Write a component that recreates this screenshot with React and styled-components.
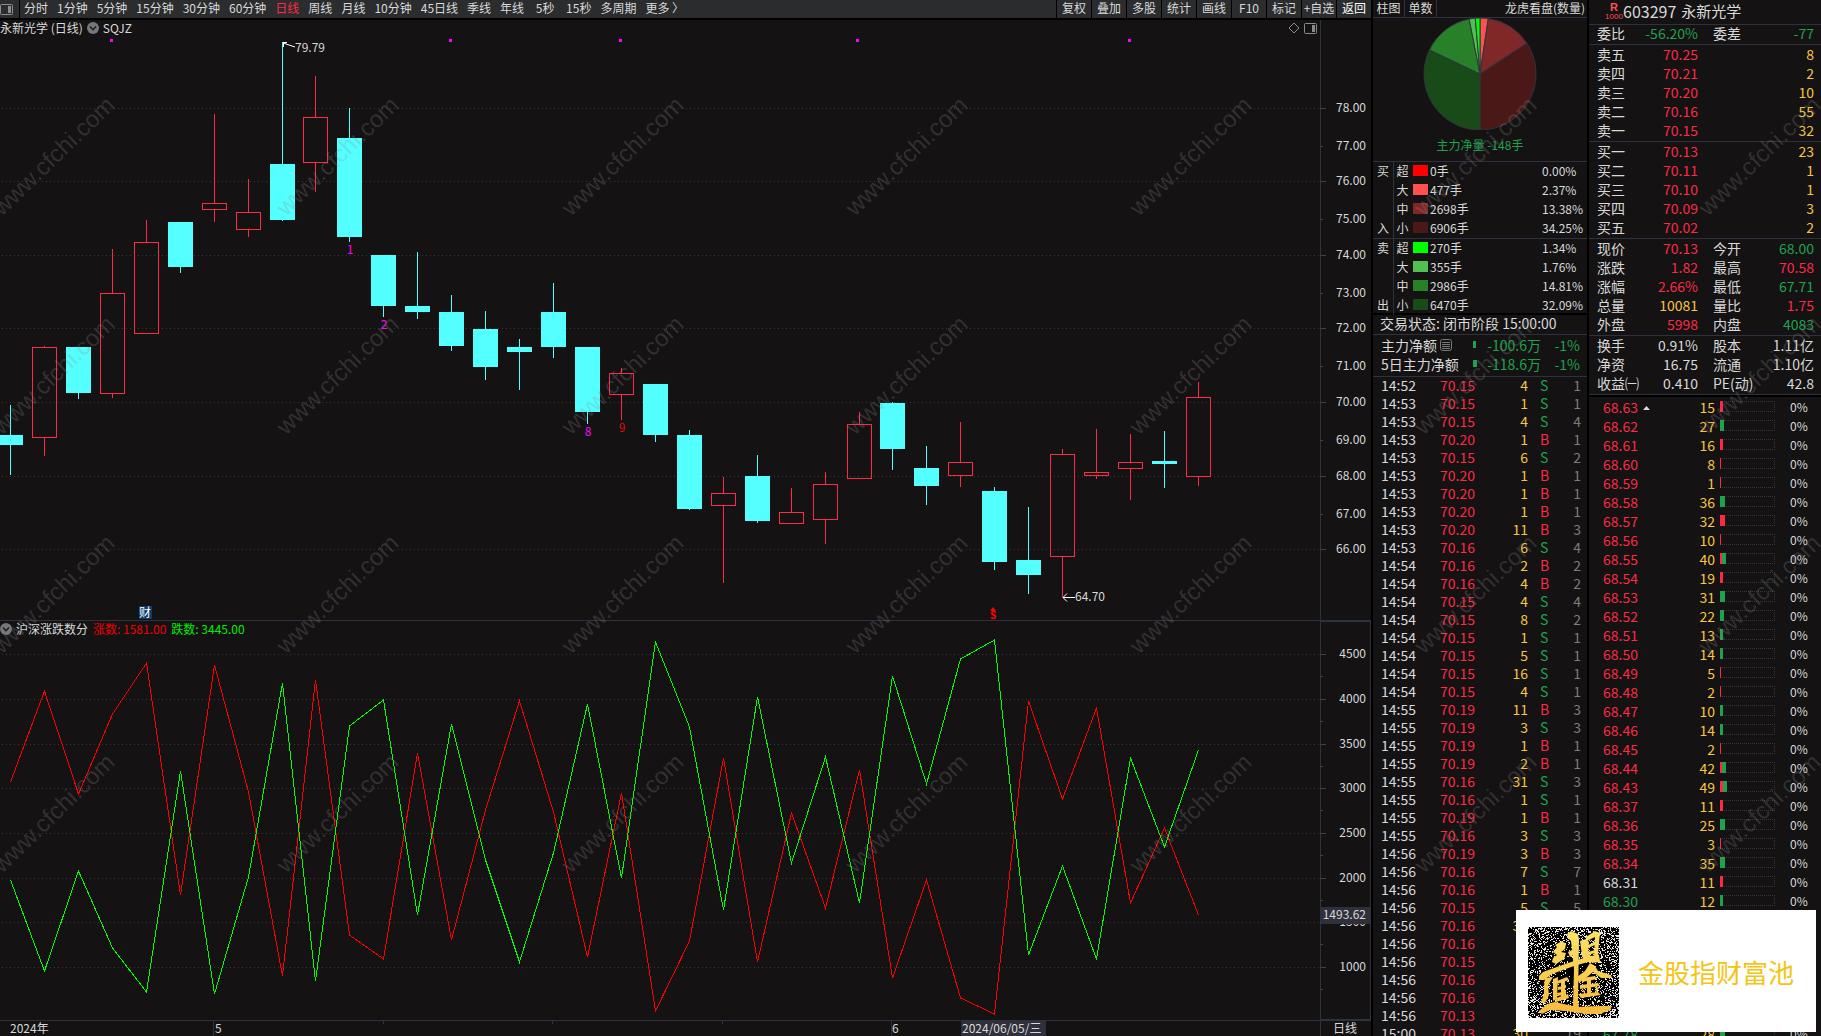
import React from 'react';
import styled, { createGlobalStyle, css } from 'styled-components';

const color = {
  bg: '#141213',
  line: '#2e323e',
  text: '#d9d9d9',
  up: '#fb2a45',
  down: '#1ea24e',
  cyan: '#54ffff',
  amber: '#f7c544',
  muted: '#7d7d7d',
};

const tones = {
  text: color.text,
  up: color.up,
  down: color.down,
  amber: color.amber,
  muted: color.muted,
};

const GlobalStyle = createGlobalStyle`
  * { box-sizing: border-box; }
  body {
    margin: 0;
    overflow: hidden;
    background: #000;
    color: ${color.text};
    font-family: "Noto Sans CJK SC", "Noto Sans", sans-serif;
    font-size: 12px;
    line-height: 16px;
  }
  button {
    margin: 0;
    padding: 0;
    border: 0;
    background: none;
    color: inherit;
    font: inherit;
    white-space: nowrap;
    cursor: pointer;
  }
  table { border-collapse: collapse; border-spacing: 0; table-layout: fixed; }
  td, th { padding: 0; font-weight: normal; text-align: left; white-space: nowrap; }
`;

const Screen = styled.div`
  position: relative;
  display: flex;
  gap: 2px;
  height: 100vh;
  overflow: hidden;
`;

const ChartColumn = styled.main`
  display: flex;
  flex: 1;
  flex-direction: column;
  min-width: 0;
  background: ${color.bg};
`;

const Toolbar = styled.nav`
  display: flex;
  flex: none;
  height: 20px;
  border-bottom: 2px solid #000;
  background: #2a2c2e;
`;

const LayoutButton = styled.button`
  display: flex;
  align-items: center;
  width: 20px;
  border-right: 1px solid #000;
`;

const Periods = styled.div`
  display: flex;
  flex: 1;
  gap: 9px;
  padding-left: 4px;
`;

const Period = styled.button`
  min-width: 24px;
  padding-bottom: 2px;
  ${(props) => props.$active && css`color: ${color.up};`}
`;

const Tool = styled.button`
  width: 35px;
  padding-bottom: 2px;
  border-left: 1px solid #000;
  ${(props) => props.$strong && css`color: #fff;`}
`;

const PaneHead = styled.div`
  display: flex;
  flex: none;
  height: 17px;
`;

const PaneTitle = styled.div`
  display: flex;
  flex: 1;
  align-items: center;
  gap: 4px;
  padding: 0 3px 1px 0;
`;

const Spacer = styled.span`
  flex: 1;
`;

const AxisHead = styled.div`
  width: 51px;
  border-left: 1px solid ${color.line};
  ${(props) => props.$boxed && css`
  border: 1px solid ${color.line};
  border-bottom: 0;
  `}
`;

const Reading = styled.span`
  margin-left: 1px;
  color: ${(props) => props.$color};
`;

const Plot = styled.svg`
  display: block;
  flex: ${(props) => props.$grow} 1 0;
  width: 100%;
  min-height: 0;
  overflow: visible;
`;

const Rule = styled.div`
  flex: none;
  height: 1px;
  background: ${color.line};
`;

const TimeAxis = styled.svg`
  display: block;
  flex: none;
  width: 100%;
  height: 15px;
  overflow: visible;
`;

const Panel = styled.aside`
  flex: none;
  width: ${(props) => props.$width}px;
  overflow: hidden;
  background: ${color.bg};
`;

const PanelTabs = styled.div`
  display: flex;
  height: 18px;
  border-bottom: 1px solid ${color.line};
  line-height: 15px;
`;

const PanelTab = styled.button`
  width: 32px;
  padding-bottom: 2px;
  border-right: 1px solid ${color.line};
`;

const PanelCaption = styled.span`
  flex: 1;
  padding-right: 2px;
  text-align: right;
`;

const PieBox = styled.figure`
  display: flex;
  flex-direction: column;
  align-items: center;
  height: 144px;
  margin: 0;
  border-bottom: 1px solid ${color.line};

  figcaption {
    margin-top: 7px;
    color: ${color.down};
  }
`;

const OrderBox = styled.section`
  height: 153px;
  border-bottom: 2px solid #000;
`;

const OrderTable = styled.table`
  width: 100%;

  tbody + tbody { border-top: 1px solid ${color.line}; }
  tr { height: 19px; }
  td, th { padding-bottom: 2px; line-height: 17px; }
`;

const SideCell = styled.th`
  && { padding-left: 4px; }
  border-right: 1px solid ${color.line};
`;

const SizeCell = styled.td`
  && { padding-left: 3px; }
`;

const Swatch = styled.span`
  display: block;
  width: 15px;
  height: 11px;
  background: ${(props) => props.$color};
`;

const Status = styled.div`
  position: relative;
  height: 20px;
  padding-left: 7px;
  border-bottom: 1px solid ${color.line};
  background: ${color.bg};
  font-size: 14px;
  line-height: 16px;
`;

const FlowRows = styled.div`
  height: 42px;
  border-bottom: 1px solid ${color.line};
  font-size: 14px;
`;

const FlowRow = styled.div`
  display: flex;
  align-items: center;
  height: 19px;
  padding: 0 7px 0 8px;
  color: ${color.down};
`;

const FlowLabel = styled.span`
  display: flex;
  align-items: center;
  gap: 3px;
  width: 92px;
  color: ${color.text};
`;

const FlowBar = styled.i`
  width: ${(props) => props.$size}px;
  height: 7px;
  background: ${color.down};
`;

const FlowValue = styled.span`
  flex: 1;
  text-align: right;
`;

const FlowShare = styled.span`
  width: 39px;
  text-align: right;
`;

const Cell = styled.td`
  color: ${(props) => tones[props.$tone || 'text']};
  ${(props) => props.$right && css`text-align: right;`}
`;

const TickTable = styled.table`
  width: 200px;
  margin-left: 8px;
  font-size: 14px;

  tr { height: 18px; }
  td { padding-bottom: 2px; line-height: 16px; }
  td:nth-child(4) { padding-left: 12px; }
`;

const StockHead = styled.header`
  display: flex;
  align-items: center;
  height: 25px;
  padding: 0 0 3px 16px;
  border-bottom: 1px solid ${color.line};
  font-size: 15px;
`;

const StockBadge = styled.span`
  width: 18px;
  margin-top: 3px;
  color: #ff5050;
  font-family: "Liberation Sans", sans-serif;
  font-size: 8px;
  line-height: 9px;
  text-align: center;

  b { display: block; font-size: 11px; }
`;

const StockCode = styled.span`
  margin-right: 5px;
  font-size: 16px;
`;

const QuoteTable = styled.table`
  width: 217px;
  margin: 0 8px;
  font-size: 14px;

  tr { height: 19px; }
  td, th { padding-bottom: 2px; line-height: 17px; }
  th:nth-child(3) { padding-left: 15px; }
`;

const QuoteGroup = styled.section`
  height: ${(props) => props.$rows * 19 + (props.$rows > 1 ? 2 : 1)}px;
  padding-top: ${(props) => (props.$rows > 1 ? 1 : 0)}px;
  border-bottom: 1px solid ${color.line};
`;

const LevelTable = styled.table`
  width: 218px;
  margin-left: 14px;
  font-size: 14px;

  tr { height: 19px; }
  td { line-height: 18px; }
  td:last-child { padding-left: 15px; font-size: 12px; }
`;

const LevelWrap = styled.section`
  border-top: 2px solid #000;
`;

const Track = styled.div`
  display: flex;
  width: 55px;
  height: 11px;
  margin-left: 5px;
  border: 1px dotted #353740;
  border-left: 0;
`;

const TrackBar = styled.i`
  height: 11px;
  margin-top: -1px;
  background: ${(props) => tones[props.$tone]};
`;

const UpMark = styled.svg`
  margin-left: 5px;
  vertical-align: 3px;
`;

const Gap = styled.tr`
  && { height: 114px; }
`;

const Watermarks = styled.svg`
  position: absolute;
  inset: 0;
  width: 100%;
  height: 100%;
  pointer-events: none;
`;

const BrandCard = styled.div`
  position: absolute;
  right: 5px;
  bottom: 4px;
  display: flex;
  align-items: center;
  gap: 19px;
  width: 300px;
  height: 122px;
  padding: 2px 0 0 12px;
  background: #fff;
  color: #f4c414;
  font-size: 26px;
  line-height: 32px;
`;

const periods = ['分时', '1分钟', '5分钟', '15分钟', '30分钟', '60分钟', '日线', '周线', '月线', '10分钟', '45日线', '季线', '年线', '5秒', '15秒', '多周期', '更多 〉'];
const tools = ['复权', '叠加', '多股', '统计', '画线', 'F10', '标记', '+自选', '返回'];

// rising?, high, body top, body bottom, low
const candles = [
  [0, 405, 435, 445, 475], [1, 346, 347, 437, 456], [0, 347, 347, 393, 399], [1, 249, 293, 393, 398],
  [1, 220, 242, 333, 333], [0, 222, 222, 267, 273], [1, 114, 203, 209, 222], [1, 179, 212, 229, 237],
  [0, 42, 164, 220, 221], [1, 76, 117, 162, 192], [0, 108, 138, 237, 242], [0, 255, 255, 306, 317],
  [0, 252, 306, 312, 319], [0, 295, 312, 346, 351], [0, 311, 329, 367, 380], [0, 339, 347, 352, 390],
  [0, 283, 312, 347, 358], [0, 347, 347, 412, 424], [1, 368, 373, 394, 420], [0, 384, 384, 435, 442],
  [0, 430, 435, 509, 510], [1, 477, 493, 505, 583], [0, 455, 476, 521, 523], [1, 488, 512, 523, 523],
  [1, 472, 484, 519, 544], [1, 412, 424, 478, 478], [0, 402, 403, 449, 470], [0, 446, 468, 486, 505],
  [1, 422, 462, 475, 487], [0, 487, 491, 562, 570], [0, 507, 560, 575, 594], [1, 449, 454, 556, 597],
  [1, 429, 472, 475, 479], [1, 434, 462, 468, 500], [0, 431, 461, 464, 488], [1, 382, 397, 476, 486],
];

const rising = [782, 691, 794, 714, 663, 895, 665, 792, 976, 680, 935, 959, 753, 940, 810, 701, 812, 957, 793, 1011, 941, 758, 962, 813, 908, 770, 978, 880, 998, 1014, 701, 799, 708, 903, 828, 915];
const falling = [880, 971, 871, 948, 992, 771, 994, 877, 683, 981, 726, 700, 915, 724, 860, 962, 853, 704, 878, 642, 727, 910, 697, 863, 757, 903, 676, 784, 659, 640, 955, 866, 959, 758, 847, 750];

const priceMarks = [[78, 108], [77, 146], [76, 181], [75, 219], [74, 255], [73, 293], [72, 328], [71, 366], [70, 402], [69, 440], [68, 476], [67, 514], [66, 549]];
const countMarks = [[4500, 654], [4000, 699], [3500, 744], [3000, 788], [2500, 833], [2000, 878], [1500, 922], [1000, 967]];

const slices = [
  [2.37, '#ff5050'], [13.38, '#802828'], [34.25, '#4b1818'],
  [32.09, '#184b18'], [14.81, '#288028'], [1.76, '#50c050'], [1.34, '#00ff00'],
];

const orders = [
  [['买', '超', '#ff0000', '0手', '0.00%'], ['', '大', '#ff5050', '477手', '2.37%'], ['', '中', '#802828', '2698手', '13.38%'], ['入', '小', '#4b1818', '6906手', '34.25%']],
  [['卖', '超', '#00ff00', '270手', '1.34%'], ['', '大', '#50c050', '355手', '1.76%'], ['', '中', '#288028', '2986手', '14.81%'], ['出', '小', '#184b18', '6470手', '32.09%']],
];

const ticks = [
  ['14:52', '70.15', 4, 'S', 1],
  ['14:53', '70.15', 1, 'S', 1],
  ['14:53', '70.15', 4, 'S', 4],
  ['14:53', '70.20', 1, 'B', 1],
  ['14:53', '70.15', 6, 'S', 2],
  ['14:53', '70.20', 1, 'B', 1],
  ['14:53', '70.20', 1, 'B', 1],
  ['14:53', '70.20', 1, 'B', 1],
  ['14:53', '70.20', 11, 'B', 3],
  ['14:53', '70.16', 6, 'S', 4],
  ['14:54', '70.16', 2, 'B', 2],
  ['14:54', '70.16', 4, 'B', 2],
  ['14:54', '70.15', 4, 'S', 4],
  ['14:54', '70.15', 8, 'S', 2],
  ['14:54', '70.15', 1, 'S', 1],
  ['14:54', '70.15', 5, 'S', 1],
  ['14:54', '70.15', 16, 'S', 1],
  ['14:54', '70.15', 4, 'S', 1],
  ['14:55', '70.19', 11, 'B', 3],
  ['14:55', '70.19', 3, 'S', 3],
  ['14:55', '70.19', 1, 'B', 1],
  ['14:55', '70.19', 2, 'B', 1],
  ['14:55', '70.16', 31, 'S', 3],
  ['14:55', '70.16', 1, 'S', 1],
  ['14:55', '70.19', 1, 'B', 1],
  ['14:55', '70.16', 3, 'S', 3],
  ['14:56', '70.19', 3, 'B', 3],
  ['14:56', '70.16', 7, 'S', 7],
  ['14:56', '70.16', 1, 'B', 1],
  ['14:56', '70.15', 5, 'S', 5],
  ['14:56', '70.16', 30],
  ['14:56', '70.16'],
  ['14:56', '70.15'],
  ['14:56', '70.16'],
  ['14:56', '70.16'],
  ['14:56', '70.13'],
  ['15:00', '70.13', 30, '', 19],
];

const sells = [['卖五', '70.25', 8], ['卖四', '70.21', 2], ['卖三', '70.20', 10], ['卖二', '70.16', 55], ['卖一', '70.15', 32]];
const buys = [['买一', '70.13', 23], ['买二', '70.11', 1], ['买三', '70.10', 1], ['买四', '70.09', 3], ['买五', '70.02', 2]];

const summary = [
  ['现价', '70.13', 'up', '今开', '68.00', 'down'],
  ['涨跌', '1.82', 'up', '最高', '70.58', 'up'],
  ['涨幅', '2.66%', 'up', '最低', '67.71', 'down'],
  ['总量', '10081', 'amber', '量比', '1.75', 'up'],
  ['外盘', '5998', 'up', '内盘', '4083', 'down'],
];

const basics = [
  ['换手', '0.91%', 'text', '股本', '1.11亿', 'text'],
  ['净资', '16.75', 'text', '流通', '1.10亿', 'text'],
  ['收益㈠', '0.410', 'text', 'PE(动)', '42.8', 'text'],
];

// price, volume, bought width, sold width
const levels = [
  ['68.63', 15, 3, 0], ['68.62', 27, 0, 4], ['68.61', 16, 3, 0], ['68.60', 8, 1, 0], ['68.59', 1, 1, 0],
  ['68.58', 36, 0, 5], ['68.57', 32, 5, 0], ['68.56', 10, 1, 0], ['68.55', 40, 2, 4], ['68.54', 19, 3, 0],
  ['68.53', 31, 0, 5], ['68.52', 22, 0, 4], ['68.51', 13, 0, 3], ['68.50', 14, 0, 3], ['68.49', 5, 1, 0],
  ['68.48', 2, 1, 0], ['68.47', 10, 0, 3], ['68.46', 14, 0, 3], ['68.45', 2, 1, 0], ['68.44', 42, 2, 4],
  ['68.43', 49, 3, 4], ['68.37', 11, 3, 0], ['68.36', 25, 0, 5], ['68.35', 3, 1, 0], ['68.34', 35, 0, 5],
  ['68.31', 11, 3, 0], ['68.30', 12, 0, 3],
];

const slotX = (i) => Math.floor(10.5 + i * 33.94) + 0.5;
const toPoints = (values) => values.map((y, i) => `${slotX(i)},${y}`).join(' ');

const levelTone = (price) => {
  if (price === '68.31') return 'text';
  return Number(price) > 68.31 ? 'up' : 'down';
};

const PanelIcon = ({ stroke }) => (
  <svg width="13" height="13" viewBox="0 0 13 13" aria-hidden="true">
    <rect x="0.5" y="1.5" width="12" height="10" rx="1" fill="none" stroke={stroke} />
    <rect x="8" y="3" width="3" height="7" fill={stroke} />
  </svg>
);

const ChevronIcon = () => (
  <svg width="12" height="12" viewBox="0 0 12 12" aria-hidden="true">
    <circle cx="6" cy="6" r="6" fill="#75777a" />
    <path d="M3 4.6L6 7.8L9 4.6" fill="none" stroke="#1b1b1c" strokeWidth="1.4" />
  </svg>
);

const GridLines = ({ marks, every }) => marks.filter((_, i) => i % every === 0).map(([value, y]) => (
  <line key={value} x1="2" x2="1320" y1={y + 0.5} y2={y + 0.5} stroke="#38383b" strokeDasharray="1 3" />
));

const AxisLabels = ({ marks, digits }) => marks.map(([value, y]) => (
  <text key={value} x="1366" y={y + 4} textAnchor="end">{value.toFixed(digits)}</text>
));

const Candle = ({ data, index }) => {
  const [isUp, high, top, bottom, low] = data;
  const x = slotX(index);
  const tint = isUp ? color.up : color.cyan;
  return (
    <g stroke={tint}>
      {high < top && <line x1={x} x2={x} y1={high} y2={top} />}
      {low > bottom && <line x1={x} x2={x} y1={bottom} y2={low} />}
      {isUp
        ? <rect x={x - 12} y={top + 0.5} width="24" height={bottom - top} fill="none" />
        : <rect x={x - 12.5} y={top} width="25" height={bottom - top} fill={tint} stroke="none" />}
    </g>
  );
};

const PriceChart = () => (
  <Plot $grow={583} viewBox="0 37 1371 583" preserveAspectRatio="none" fill={color.text} role="img" aria-label="日线">
    <g shapeRendering="crispEdges">
      <GridLines marks={priceMarks} every={2} />
      <line x1="1320.5" x2="1320.5" y1="37" y2="620" stroke={color.line} />
      {priceMarks.map(([value, y], i) => (
        <line key={value} x1="1320" x2={i % 2 ? 1323 : 1326} y1={y + 0.5} y2={y + 0.5} stroke="#3d414d" />
      ))}
      {candles.map((data, i) => <Candle key={i} data={data} index={i} />)}
      {[110, 449, 619, 856, 1128].map((x) => <rect key={x} x={x} y="39" width="3" height="3" fill="#ff00ff" />)}
    </g>
    <AxisLabels marks={priceMarks} digits={2} />
    <path d="M283 42.5h4M283 43l12 4M283.500 42v5" fill="none" stroke="#fff" />
    <text x="295" y="52">79.79</text>
    <path d="M1063 597.500h12M1067 593.500l-4 4l4 4" fill="none" stroke="#fff" />
    <text x="1075" y="601">64.70</text>
    <g fill="#ff00ff" textAnchor="middle">
      <text x="350" y="254">1</text>
      <text x="384" y="329">2</text>
      <text x="588" y="436">8</text>
      <text x="622" y="432" fill="#f00000">9</text>
    </g>
    <rect x="139" y="606" width="13" height="13" fill="#0d3b70" />
    <text x="145" y="617" textAnchor="middle" fill="#fff">财</text>
    <path d="M993 607l3 4h-6z" fill="#f00" />
    <text x="993" y="619" textAnchor="middle" fill="#f00" fontSize="10" fontWeight="bold">S</text>
  </Plot>
);

const BreadthChart = () => (
  <Plot $grow={382} viewBox="0 638 1371 382" preserveAspectRatio="none" fill={color.text} role="img" aria-label="沪深涨跌数分">
    <g shapeRendering="crispEdges" fill="none">
      <GridLines marks={countMarks} every={1} />
      <path d="M1320.500 638V1019.500H1370.500V638" stroke={color.line} />
      {countMarks.map(([value, y]) => (
        <path key={value} d={`M1320 ${y + 0.5}h6M1320 ${y + 22.5}h3`} stroke="#3d414d" />
      ))}
      <polyline points={toPoints(rising)} stroke="#f00" />
      <polyline points={toPoints(falling)} stroke="#0f0" />
    </g>
    <AxisLabels marks={countMarks} digits={0} />
    <rect x="1321" y="907" width="50" height="17" fill="#2f303c" />
    <text x="1366" y="919" textAnchor="end">1493.62</text>
  </Plot>
);

const Pie = () => {
  let turned = 0;
  const point = (share) => {
    const angle = (share / 100) * Math.PI * 2;
    return `${57 + Math.sin(angle) * 56} ${56 - Math.cos(angle) * 56}`;
  };
  return (
    <svg width="114" height="112" viewBox="0 0 114 112" aria-hidden="true">
      {slices.map(([share, fill]) => {
        const from = point(turned);
        turned += share;
        return <path key={fill} d={`M57 56L${from}A56 56 0 0 1 ${point(turned)}Z`} fill={fill} stroke="#30343f" />;
      })}
    </svg>
  );
};

// Speckle thins out towards the middle of the tile
const speckle = () => {
  let seed = 7;
  let d = '';
  for (let y = 0; y < 91; y += 1) {
    for (let x = 0; x < 91; x += 1) {
      seed = (seed * 16807) % 2147483647;
      const reach = Math.hypot(x - 45, y - 45) / 64;
      if (seed / 2147483647 < reach * 0.42) d += `M${x} ${y}h1v1h-1z`;
    }
  }
  return d;
};

const speckles = speckle();

const BrandMark = () => (
  <svg width="91" height="91" viewBox="0 0 91 91" aria-hidden="true">
    <defs>
      <linearGradient id="gold" gradientUnits="userSpaceOnUse" x1="0" y1="0" x2="0" y2="91">
        <stop offset="0" stopColor="#fae468" />
        <stop offset="1" stopColor="#f6b83a" />
      </linearGradient>
    </defs>
    <rect width="91" height="91" fill="#000" />
    <path d={speckles} fill="#e9e7e0" shapeRendering="crispEdges" />
    <g fill="url(#gold)">
      <path d="M39 7l4-3l7 3l1 5l-1 62l1 6h-6l1-38l-3-28l-3-3z" />
      <path d="M27 18l7-4l4 3l-1 5l-4 3l5 1l-2 6l-8 5l-4-2l1-4l4-3l-4-3l4-5z" />
      <path d="M40 25l10-5v5l-8 5z" />
      <path d="M52 14l6-2l3 3l-1 10l4 6l-8 3l-2-6z" />
      <path d="M58 10l9-6l5 2l-2 20l2 9l-8 1l-2-3l4-3l1-20l-8 4z" />
      <path d="M60 18l7-3v3l-7 3zM60 25l7-2v3l-7 2z" />
      <path d="M11 49l4-4l25-9l22-7l9-1l1 7l-12 0l-14 4l-22 8l-8 6l-5 0z" />
      <path d="M49 50l8-6l5-8l5 3l3 5l13 4l1 3l-11 0l-8-6l-6 5l-8 6z" />
      <path d="M54 51l13-2l2 3l-15 3zM52 58l18-2l2 3l-20 3zM50 67l20-2l3 3l-20 3zM59 51h4v18h-4zM54 62l3 2v4zM68 60l3 1l-4 6z" />
      <path d="M17 51l8-1l-3 5l-2 4l1 9l-4 8l-4-1l3-8v-8z" />
      <path d="M25 52l5-2l-1 22l-4 2zM29 54l10-4l2 3l-12 4zM30 60l8-2v3l-8 2zM29 66l9-2v3l-8 2zM28 71l12-4l1 4l-13 4zM33 53h4v18h-4z" />
      <path d="M11 84l8-7l8-2l22 5l22-1l13 0l-2 4l-10 4l-14 0l-20-3l-16-1l-8 4z" />
    </g>
  </svg>
);

const QuoteRows = ({ rows }) => (
  <QuoteTable>
    <colgroup><col width="36" /><col width="65" /><col width="56" /><col width="60" /></colgroup>
    <tbody>
      {rows.map(([label, value, tone, label2, value2, tone2]) => (
        <tr key={label}>
          <th>{label}</th>
          <Cell $right $tone={tone}>{value}</Cell>
          <th>{label2}</th>
          <Cell $right $tone={tone2}>{value2}</Cell>
        </tr>
      ))}
    </tbody>
  </QuoteTable>
);

const toDepth = (rows) => rows.map(([label, price, volume]) => [label, price, 'up', '', volume, 'amber']);

const LevelRow = ({ price, volume, bought, sold, marked }) => (
  <tr>
    <Cell $tone={levelTone(price)}>
      {price}
      {marked && <UpMark width="7" height="4" viewBox="0 0 7 4"><path d="M3.500 0L7 4H0z" fill="#d9d9d9" /></UpMark>}
    </Cell>
    <Cell $right $tone="amber">{volume}</Cell>
    <td>
      <Track>
        <TrackBar $tone="up" style={{ width: bought }} />
        <TrackBar $tone="down" style={{ width: sold }} />
      </Track>
    </td>
    <td>0%</td>
  </tr>
);

const FlowPanel = () => (
  <Panel $width={214}>
    <PanelTabs>
      <PanelTab>柱图</PanelTab>
      <PanelTab>单数</PanelTab>
      <PanelCaption>龙虎看盘(数量)</PanelCaption>
    </PanelTabs>
    <PieBox>
      <Pie />
      <figcaption>主力净量 -148手</figcaption>
    </PieBox>
    <OrderBox>
      <OrderTable>
        <colgroup><col width="20" /><col width="20" /><col width="17" /><col width="112" /><col width="45" /></colgroup>
        {orders.map((group) => (
          <tbody key={group[0][0]}>
            {group.map(([side, size, fill, count, share]) => (
              <tr key={size}>
                <SideCell>{side}</SideCell>
                <SizeCell>{size}</SizeCell>
                <td><Swatch $color={fill} /></td>
                <td>{count}</td>
                <td>{share}</td>
              </tr>
            ))}
          </tbody>
        ))}
      </OrderTable>
    </OrderBox>
    <Status>交易状态: 闭市阶段 15:00:00</Status>
    <FlowRows>
      <FlowRow>
        <FlowLabel>
          主力净额
          <svg width="12" height="12" viewBox="0 0 12 12" aria-hidden="true">
            <rect x="0.5" y="0.5" width="11" height="11" rx="2" fill="none" stroke="#77797c" />
            <path d="M2 3.500h8M2 5.500h8M2 7.500h8M2 9.500h8" stroke="#77797c" />
          </svg>
        </FlowLabel>
        <FlowBar $size={3} />
        <FlowValue>-100.6万</FlowValue>
        <FlowShare>-1%</FlowShare>
      </FlowRow>
      <FlowRow>
        <FlowLabel>5日主力净额</FlowLabel>
        <FlowBar $size={4} />
        <FlowValue>-118.6万</FlowValue>
        <FlowShare>-1%</FlowShare>
      </FlowRow>
    </FlowRows>
    <TickTable>
      <colgroup><col width="59" /><col width="50" /><col width="38" /><col width="30" /><col width="23" /></colgroup>
      <tbody>
        {ticks.map(([time, price, volume, side, trades], i) => (
          <tr key={i}>
            <td>{time}</td>
            <Cell $tone="up">{price}</Cell>
            <Cell $right $tone="amber">{volume}</Cell>
            <Cell $tone={side === 'B' ? 'up' : 'down'}>{side}</Cell>
            <Cell $right $tone="muted">{trades}</Cell>
          </tr>
        ))}
      </tbody>
    </TickTable>
  </Panel>
);

const QuotePanel = () => (
  <Panel $width={232}>
    <StockHead>
      <StockBadge><b>R</b>1000</StockBadge>
      <StockCode>603297</StockCode>
      永新光学
    </StockHead>
    <QuoteGroup $rows={1}>
      <QuoteRows rows={[['委比', '-56.20%', 'down', '委差', '-77', 'down']]} />
    </QuoteGroup>
    <QuoteGroup $rows={5}><QuoteRows rows={toDepth(sells)} /></QuoteGroup>
    <QuoteGroup $rows={5}><QuoteRows rows={toDepth(buys)} /></QuoteGroup>
    <QuoteGroup $rows={5}><QuoteRows rows={summary} /></QuoteGroup>
    <QuoteGroup $rows={3}><QuoteRows rows={basics} /></QuoteGroup>
    <LevelWrap>
      <LevelTable>
        <colgroup><col width="60" /><col width="52" /><col width="60" /><col width="46" /></colgroup>
        <tbody>
          {levels.map(([price, volume, bought, sold], i) => (
            <LevelRow key={price} price={price} volume={volume} bought={bought} sold={sold} marked={i === 0} />
          ))}
          <Gap />
          <LevelRow price="67.78" volume={28} bought={0} sold={5} />
        </tbody>
      </LevelTable>
    </LevelWrap>
  </Panel>
);

const App = () => (
  <Screen>
    <GlobalStyle />
    <ChartColumn>
      <Toolbar>
        <LayoutButton aria-label="布局"><PanelIcon stroke="#8c8e91" /></LayoutButton>
        <Periods>
          {periods.map((name) => <Period key={name} $active={name === '日线'}>{name}</Period>)}
        </Periods>
        {tools.map((name) => <Tool key={name} $strong={name === '返回'}>{name}</Tool>)}
      </Toolbar>
      <PaneHead>
        <PaneTitle>
          <span>永新光学 (日线)</span>
          <ChevronIcon />
          <span>SQJZ</span>
          <Spacer />
          <svg width="12" height="12" viewBox="0 0 12 12" aria-hidden="true">
            <path d="M6 1L11 6L6 11L1 6Z" fill="none" stroke="#8a8a8a" />
          </svg>
          <PanelIcon stroke="#8a8a8a" />
        </PaneTitle>
        <AxisHead />
      </PaneHead>
      <PriceChart />
      <Rule />
      <PaneHead>
        <PaneTitle>
          <ChevronIcon />
          <span>沪深涨跌数分</span>
          <Reading $color="#f00000">涨数: 1581.00</Reading>
          <Reading $color="#00f000">跌数: 3445.00</Reading>
        </PaneTitle>
        <AxisHead $boxed />
      </PaneHead>
      <BreadthChart />
      <Rule />
      <TimeAxis viewBox="0 0 1371 15" preserveAspectRatio="none" fill={color.text}>
        <path d="M213.500 0v15M891.500 0v15M1320.500 0v15M383.500 0v3M552.500 0v3M722.500 0v3" stroke={color.line} />
        <text x="10" y="12">2024年</text>
        <text x="215" y="12">5</text>
        <text x="892" y="12">6</text>
        <rect x="961" width="85" height="15" fill="#2f303c" />
        <text x="962" y="12">2024/06/05/三</text>
        <text x="1333" y="12">日线</text>
      </TimeAxis>
    </ChartColumn>
    <FlowPanel />
    <QuotePanel />
    <Watermarks fontFamily="Liberation Sans" fontSize="24" fill="rgba(140, 140, 140, 0.25)" aria-hidden="true">
      {[217, 436, 655, 874].map((y) => [2, 286, 571, 855, 1139, 1424, 1708].map((x) => (
        <text key={`${x}-${y}`} transform={`translate(${x} ${y}) rotate(-44)`}>www.cfchi.com</text>
      )))}
    </Watermarks>
    <BrandCard>
      <BrandMark />
      <span>金股指财富池</span>
    </BrandCard>
  </Screen>
);

export default App;
